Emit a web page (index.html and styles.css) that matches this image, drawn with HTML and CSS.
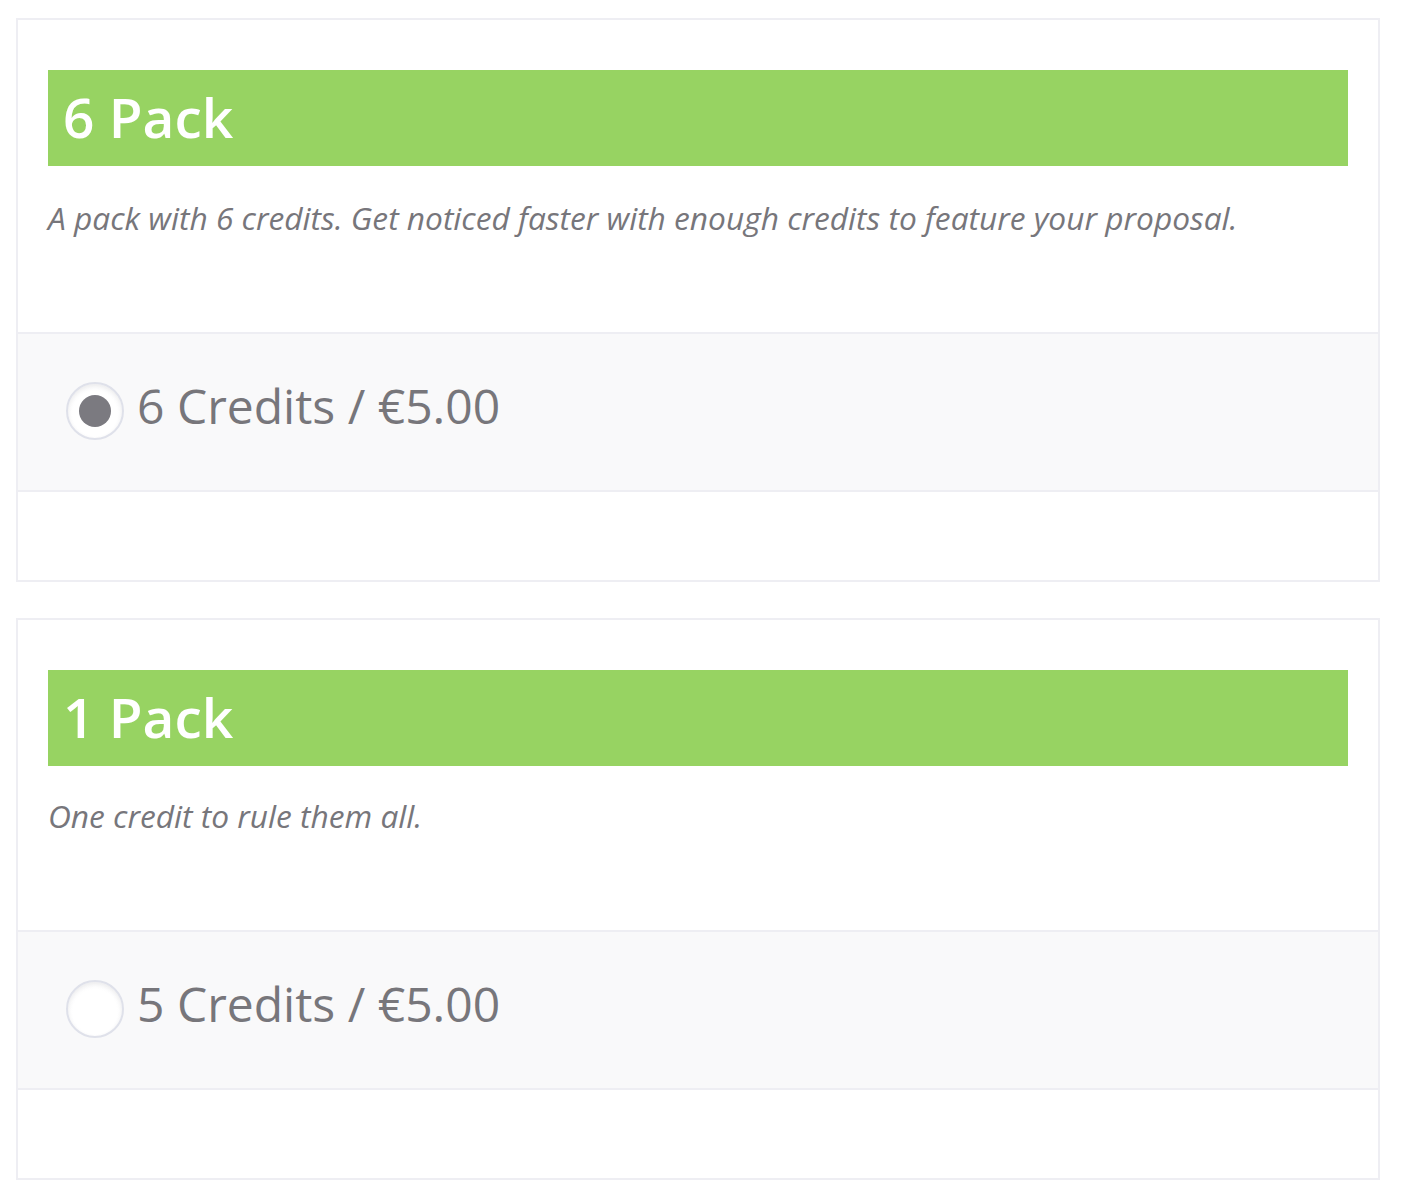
FILE: index.html
```html
<!DOCTYPE html>
<html lang="en">
<head>
<meta charset="utf-8">
<title>Credit packs</title>
<link rel="stylesheet" href="styles.css">
</head>
<body>
<div class="packs">
  <section class="pack">
    <h2 class="pack-head">6 Pack</h2>
    <p class="pack-desc">A pack with 6 credits. Get noticed faster with enough credits to feature your proposal.</p>
    <label class="pack-option">
      <input class="pack-radio" type="radio" name="pack" checked>
      <span class="pack-price">6 Credits / €5.00</span>
    </label>
    <div class="pack-foot"></div>
  </section>
  <section class="pack">
    <h2 class="pack-head">1 Pack</h2>
    <p class="pack-desc pack-desc-tight">One credit to rule them all.</p>
    <label class="pack-option">
      <input class="pack-radio" type="radio" name="pack">
      <span class="pack-price">5 Credits / €5.00</span>
    </label>
    <div class="pack-foot"></div>
  </section>
</div>
</body>
</html>
```
FILE: styles.css
```css
html, body {
  margin: 0;
  padding: 0;
  background: #ffffff;
}

body {
  font-family: "Open Sans", "Noto Sans", "Liberation Sans", sans-serif;
  color: #77767b;
}

.packs {
  padding: 18px 0 0 16px;
  display: flex;
  flex-direction: column;
  gap: 36px;
}

.pack {
  width: 1364px;
  box-sizing: border-box;
  border: 2px solid #eeeef3;
  background: #ffffff;
}

.pack-head {
  margin: 50px 30px 0;
  height: 96px;
  box-sizing: border-box;
  padding: 0 0 3px 15px;
  display: flex;
  align-items: center;
  background: #97d362;
  color: #ffffff;
  font-weight: 600;
  font-size: 55px;
  line-height: 1;
}

.pack-desc {
  margin: 0;
  padding: 31px 30px 93px;
  font-style: italic;
  font-size: 31.7px;
  line-height: 42px;
  color: #77767b;
}

.pack-desc-tight {
  padding-top: 29px;
}

.pack-option {
  display: flex;
  align-items: center;
  gap: 12px;
  height: 160px;
  box-sizing: border-box;
  padding-left: 48px;
  border-top: 2px solid #eeeef3;
  border-bottom: 2px solid #eeeef3;
  background: #f9f9fa;
  cursor: pointer;
}

.pack-radio {
  appearance: none;
  -webkit-appearance: none;
  margin: -3px 0 0;
  width: 58px;
  height: 58px;
  border-radius: 50%;
  border: 2px solid #dfe1ea;
  box-sizing: border-box;
  background: radial-gradient(circle at 50% 55%, #ffffff 55%, #eeeef1 100%);
  box-shadow: inset 0 2px 4px rgba(0, 0, 0, 0.05);
  position: relative;
  flex: none;
}

.pack-radio:checked::after {
  content: "";
  position: absolute;
  left: 50%;
  top: 50%;
  width: 32px;
  height: 32px;
  margin: -16px 0 0 -16px;
  border-radius: 50%;
  background: #7b7a80;
}

.pack-price {
  font-size: 48px;
  line-height: 1;
  color: #77767b;
  margin-top: -12px;
  margin-left: 1px;
}

.pack-foot {
  height: 88px;
}
```
